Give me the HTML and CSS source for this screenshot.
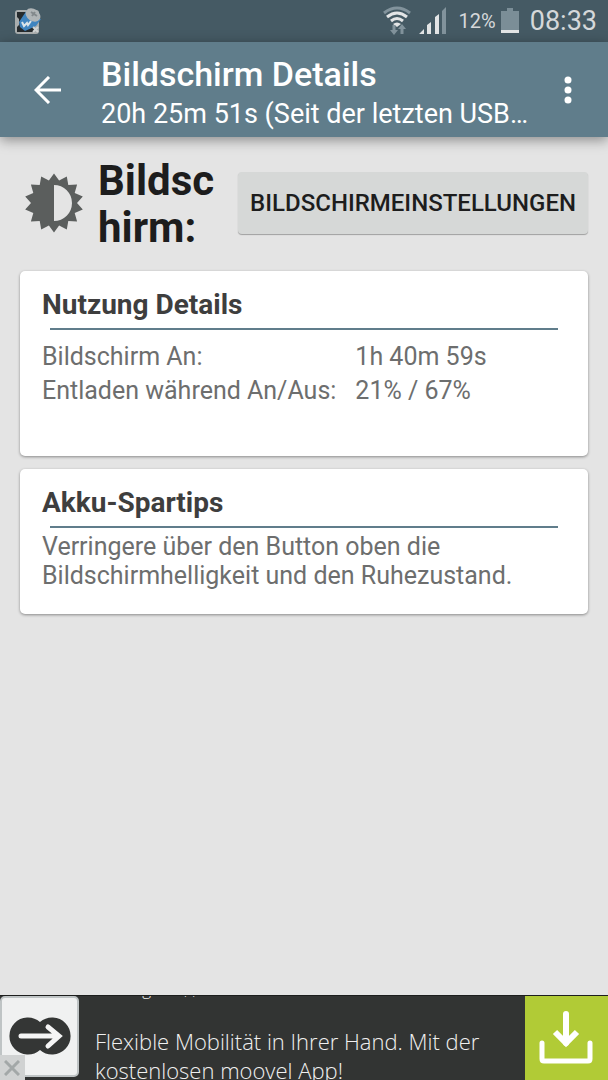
FILE: index.html
```html
<!DOCTYPE html>
<html lang="de">
<head>
<meta charset="utf-8">
<meta name="viewport" content="width=device-width, initial-scale=1">
<title>Bildschirm Details</title>
<link rel="stylesheet" href="styles.css">
</head>
<body>
<div class="status">
  <svg class="app-icon" width="28" height="28" viewBox="0 0 28 28" aria-hidden="true">
    <rect x="1" y="3" width="24" height="24" rx="3" fill="#a9adad"/>
    <path d="M3 5H15V25H3V20L5 18V12L3 10Z" fill="#262b2d"/>
    <path d="M12 24L20 18V25H12Z" fill="#262b2d"/>
    <path d="M13 3L19 11L27 12L22 19L11 24L6 20L5 15Z" fill="#3f84bf"/>
    <ellipse cx="19" cy="8" rx="8" ry="6" transform="rotate(35 19 8)" fill="#b0b5b7"/>
    <path d="M17 5L23 9M18 9L21 5" stroke="#83898c" stroke-width="2"/>
    <path d="M19 20l5 5M19 25l5-5" stroke="#d0d3d3" stroke-width="2"/>
    <path d="M8 15l2 4 3-3 1 2 3-4" fill="none" stroke="#dbe5ea" stroke-width="2"/>
  </svg>
  <svg class="wifi" width="28" height="30" viewBox="0 0 28 30" fill="none" aria-hidden="true">
    <path d="M1 7Q14-3 27 7" stroke="#82939c" stroke-width="3"/>
    <path d="M4 11Q14 3 24 11M8 15Q14 10 20 15" stroke="#e3e5e6" stroke-width="3"/>
    <path d="M10 18Q14 15 18 18L14 21Z" fill="#e3e5e6"/>
    <path d="M11 19V26M19 28V21" stroke="#82939c" stroke-width="3"/>
    <path d="M7 24H15L11 29ZM15 23H23L19 18Z" fill="#82939c"/>
  </svg>
  <svg class="signal" width="28" height="28" viewBox="0 0 28 28" fill="#e3e5e6" aria-hidden="true">
    <path d="M0 27L5 22V27ZM8 18L12 15V27H8ZM16 10L20 7V27H16Z"/>
    <path d="M23 4L27 0V27H23Z" fill="#82939c"/>
  </svg>
  <span class="percent">12%</span>
  <svg class="battery" width="18" height="26" viewBox="0 0 18 26" aria-hidden="true">
    <path d="M0 3H6V0H12V3H18V22H0Z" fill="#7b8e97"/><path d="M0 22H18V25H0Z" fill="#e3e5e6"/>
  </svg>
  <span class="clock">08:33</span>
</div>

<header class="appbar">
  <button class="icon-button back" aria-label="Zurück">
    <svg width="28" height="28" viewBox="0 0 28 28" fill="none" stroke="#fff" stroke-width="3" aria-hidden="true"><path d="M27 14H3M15 1L2 14L15 27"/></svg>
  </button>
  <div class="titles">
    <h1>Bildschirm Details</h1>
    <p>20h 25m 51s (Seit der letzten USB…</p>
  </div>
  <button class="icon-button more" aria-label="Weitere Optionen">
    <svg width="8" height="28" viewBox="0 0 8 28" fill="#fff" aria-hidden="true"><circle cx="4" cy="4" r="3.500"/><circle cx="4" cy="14" r="3.500"/><circle cx="4" cy="24" r="3.500"/></svg>
  </button>
</header>

<main>
  <div class="intro">
    <svg width="60" height="60" viewBox="-30 -30 60 60" aria-hidden="true">
      <path fill="#5b5e5d" fill-rule="evenodd" d="M0-29.5L5.1-22.4L12.8-26.6L14.3-18L23.1-18.4L20.7-10L28.8-6.6L23 0L28.8 6.6L20.7 10L23.1 18.4L14.3 18L12.8 26.6L5.1 22.4L0 29.5L-5.1 22.4L-12.8 26.6L-14.3 18L-23.1 18.4L-20.7 10L-28.8 6.6L-23 0L-28.8-6.6L-20.7-10L-23.1-18.4L-14.3-18L-12.8-26.6L-5.1-22.4ZM0-18V18A18 18 0 0 0 0-18Z"/>
    </svg>
    <h2>Bildschirm:</h2>
    <button class="settings">BILDSCHIRMEINSTELLUNGEN</button>
  </div>

  <section class="card usage">
    <h3>Nutzung Details</h3>
    <dl>
      <dt>Bildschirm An:</dt><dd>1h 40m 59s</dd>
      <dt>Entladen während An/Aus:</dt><dd>21% / 67%</dd>
    </dl>
  </section>

  <section class="card tips">
    <h3>Akku-Spartips</h3>
    <p>Verringere über den Button oben die Bildschirmhelligkeit und den Ruhezustand.</p>
  </section>
</main>

<aside class="ad">
  <div class="logo">
    <svg width="80" height="84" viewBox="0 0 80 84" aria-hidden="true">
      <rect x="1" y="1" width="77" height="79" rx="4" fill="#f0f1f1" stroke="#bfc4c5" stroke-width="2"/>
      <path d="M40 26A18.500 18.500 0 1 0 40 54A18.500 18.500 0 1 0 40 26Z" fill="#343635"/>
      <path d="M21 40H56M48 31L59 40L48 50" fill="none" stroke="#f5f5f5" stroke-width="5" stroke-linecap="round"/>
    </svg>
    <button class="close" aria-label="Anzeige schließen">
      <svg width="16" height="16" viewBox="0 0 16 16" stroke="#a3a8a8" stroke-width="3" aria-hidden="true"><path d="M1 1L15 15M15 1L1 15"/></svg>
    </button>
  </div>
  <p class="ad-text"><span>moov g min, ,</span>Flexible Mobilität in Ihrer Hand. Mit der kostenlosen moovel App!</p>
  <button class="download" aria-label="Herunterladen">
    <svg width="54" height="54" viewBox="0 0 54 54" fill="none" stroke="#fff" aria-hidden="true">
      <path d="M27 3V32" stroke-width="6" stroke-linecap="round"/><path d="M16 21L27 32L38 21" stroke-width="6"/>
      <path d="M3 32V48Q3 50 5 50H49Q51 50 51 48V32" stroke-width="5" stroke-linecap="round"/>
    </svg>
  </button>
</aside>
</body>
</html>
```
FILE: styles.css
```css
* {
  box-sizing: border-box;
}

body {
  margin: 0;
  min-height: 100vh;
  display: flex;
  flex-direction: column;
  background: #e4e4e4;
  color: #6d6e6e;
  font-family: Roboto, "Liberation Sans", sans-serif;
}

h1, h2, h3, p, dl, dd {
  margin: 0;
}

button {
  border: 0;
  padding: 0;
  font-family: inherit;
}

svg {
  display: block;
  flex: none;
}

.status {
  height: 42px;
  display: flex;
  align-items: center;
  padding: 0 11px 0 14px;
  background: #455a64;
  color: #d5d8da;
}

.app-icon {
  margin-right: auto;
}

.signal {
  margin-left: 8px;
}

.percent {
  margin-left: 12px;
  font-size: 20px;
}

.battery {
  margin-left: 5px;
}

.clock {
  margin-left: 11px;
  font-size: 27px;
}

.appbar {
  height: 95px;
  display: flex;
  align-items: center;
  padding: 0 24px 0 34px;
  background: #607d8b;
  color: #fff;
  box-shadow: 0 3px 12px rgba(0, 0, 0, 0.4);
}

.icon-button {
  flex: none;
  background: none;
}

.more {
  width: 32px;
  padding: 0 12px;
}

.titles {
  flex: 1;
  min-width: 0;
  margin: 0 18px 0 39px;
  padding-top: 8px;
}

.titles h1 {
  font-size: 34px;
  line-height: 40px;
  font-weight: 500;
}

.titles p {
  font-size: 27px;
  line-height: 40px;
  overflow: hidden;
  white-space: nowrap;
  text-overflow: ellipsis;
}

main {
  flex: 1;
  padding: 18px 20px;
}

.intro {
  display: flex;
  align-items: center;
  padding-left: 4px;
  margin-bottom: 20px;
}

.intro h2 {
  flex: 1;
  min-width: 0;
  margin: 0 8px 0 14px;
  padding-top: 2px;
  color: #1d1d1d;
  font-size: 42px;
  line-height: 47px;
  font-weight: 700;
  overflow-wrap: anywhere;
}

.settings {
  flex: none;
  height: 62px;
  padding: 0 12px;
  border-radius: 4px;
  background: #d6d8d7;
  color: #1d1d1d;
  font-size: 24px;
  font-weight: 500;
  box-shadow: 0 1px 1px rgba(0, 0, 0, 0.3);
}

.card {
  padding: 16px 22px 24px;
  border-radius: 5px;
  background: #fff;
  box-shadow: 0 1px 3px rgba(0, 0, 0, 0.4);
  font-size: 25px;
}

.card + .card {
  margin-top: 13px;
}

.card h3 {
  color: #3e3e3e;
  font-size: 28px;
  line-height: 36px;
  font-weight: 700;
}

.card h3::after {
  content: "";
  display: block;
  height: 2px;
  margin: 5px 8px 0;
  background: #607d8b;
}

.usage {
  padding-bottom: 48px;
}

.usage dl {
  display: grid;
  grid-template-columns: max-content 1fr;
  column-gap: 19px;
  padding-top: 10px;
  line-height: 34px;
}

.tips p {
  padding-top: 4px;
  line-height: 29px;
}

.ad {
  height: 85px;
  display: flex;
  border-top: 1px solid #1c1e1d;
  background: #323433;
  overflow: hidden;
}

.logo {
  position: relative;
  flex: none;
}

.close {
  position: absolute;
  left: 0;
  bottom: 0;
  width: 25px;
  height: 25px;
  padding: 4px;
  background: #d0d2d2;
}

.ad-text {
  flex: 1;
  min-width: 0;
  padding: 0 20px 0 15px;
  color: #f0f0f0;
  font-family: "Open Sans", sans-serif;
  font-size: 22px;
  font-weight: 300;
  line-height: 29px;
}

.ad-text span {
  display: block;
  margin: -22px 0 24px;
  font-size: 17px;
}

.download {
  flex: none;
  width: 83px;
  padding: 14px;
  background: #b1cb36;
}
```
